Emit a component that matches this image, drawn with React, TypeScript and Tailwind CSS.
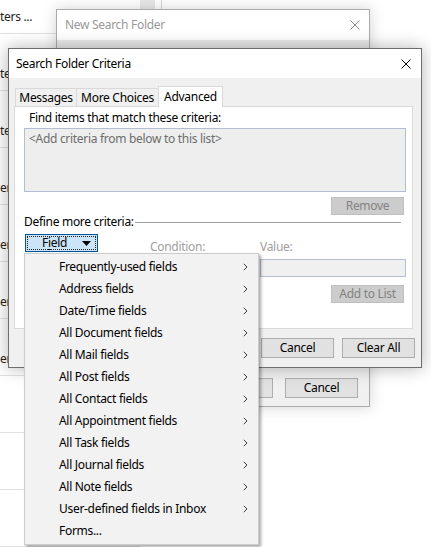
import React from 'react';

const menuItems: { label: string; sub: boolean }[] = [
  { label: 'Frequently-used fields', sub: true },
  { label: 'Address fields', sub: true },
  { label: 'Date/Time fields', sub: true },
  { label: 'All Document fields', sub: true },
  { label: 'All Mail fields', sub: true },
  { label: 'All Post fields', sub: true },
  { label: 'All Contact fields', sub: true },
  { label: 'All Appointment fields', sub: true },
  { label: 'All Task fields', sub: true },
  { label: 'All Journal fields', sub: true },
  { label: 'All Note fields', sub: true },
  { label: 'User-defined fields in Inbox', sub: true },
  { label: 'Forms...', sub: false },
];

// bits of the folder list entries peeking out from behind the dialog
const listTails = ['te', 'te', 'er', 'er', 'er', 'er', '', '', ''];

function CloseX({ color }: { color: string }) {
  return (
    <svg width="10" height="10" viewBox="0 0 10 10" className="shrink-0">
      <path d="M0.5 0.5 L9.5 9.5 M9.5 0.5 L0.5 9.5" stroke={color} strokeWidth="1" fill="none" />
    </svg>
  );
}

function Chevron() {
  return (
    <svg width="5" height="8" viewBox="0 0 5 8" className="shrink-0">
      <path d="M0.8 0.8 L4 4 L0.8 7.2" stroke="#3c3c3c" strokeWidth="1" fill="none" />
    </svg>
  );
}

function WinButton({ children, disabled, className = '' }: { children: React.ReactNode; disabled?: boolean; className?: string }) {
  return (
    <div
      className={`w-[73px] h-[20px] flex items-center justify-center border ${
        disabled ? 'bg-[#cccccc] border-[#bfbfbf] text-[#838383]' : 'bg-[#e1e1e1] border-[#adadad] text-black'
      } ${className}`}
    >
      {children}
    </div>
  );
}

function FolderList() {
  return (
    <div className="absolute left-0 top-0 h-[547px] flex">
      <div className="w-[140px] flex flex-col">
        <div className="h-[35px] border-b border-[#e1e1e1] flex items-center">
          <span className="text-[#222]">ters ...</span>
        </div>
        {listTails.map((t, i) => (
          <div key={i} className="h-[57px] shrink-0 border-b border-[#e1e1e1] pt-[32px]">
            <div className="h-[16px] leading-[16px] whitespace-nowrap text-[#222]">{t}</div>
          </div>
        ))}
      </div>
      <div className="w-[15px] h-[40px] bg-[#e8e8e8]" />
      <div className="w-[6px]" />
      <div className="w-px h-[40px] bg-[#d6d6d6]" />
    </div>
  );
}

function NewSearchFolderWindow() {
  return (
    <div className="absolute left-[56px] top-[9px] w-[314px] h-[398px] border border-[#aaaaaa] bg-[#f0f0f0] flex flex-col shadow-[0_0_14px_rgba(0,0,0,0.18)]">
      <div className="h-[30px] bg-white flex items-center justify-between pl-[8px] pr-[9px]">
        <span className="text-[#999999]">New Search Folder</span>
        <CloseX color="#8a8a8a" />
      </div>
      <div className="h-[8px] bg-[#e9e9e9]" />
      <div className="flex-1" />
      <div className="flex justify-end gap-[12px] pr-[11px] pb-[8px]">
        <WinButton>OK</WinButton>
        <WinButton>Cancel</WinButton>
      </div>
    </div>
  );
}

function CriteriaDialog() {
  return (
    <div className="absolute left-[8px] top-[48px] w-[414px] h-[320px] border border-[#6e6e6e] bg-[#f0f0f0] flex flex-col shadow-[0_0_16px_rgba(0,0,0,0.3)]">
      {/* title bar */}
      <div className="h-[29px] bg-white flex items-center justify-between pl-[7px] pr-[10px]">
        <span>Search Folder Criteria</span>
        <CloseX color="#000000" />
      </div>

      {/* tabs */}
      <div className="flex items-end h-[20px] mt-[8px] ml-[6px]">
        <div className="w-[62px] h-[18px] border border-b-0 border-[#d9d9d9] flex items-center justify-center pt-px">Messages</div>
        <div className="w-[82px] h-[18px] border border-l-0 border-b-0 border-[#d9d9d9] flex items-center justify-center pt-px">More Choices</div>
        <div className="relative z-10 w-[65px] h-[21px] -mb-px -ml-px border border-b-0 border-[#d9d9d9] bg-white flex items-start justify-center pt-[1px]">
          Advanced
        </div>
      </div>

      {/* tab page */}
      <div className="ml-[5px] w-[399px] h-[223px] border border-[#d9d9d9] bg-white flex flex-col pl-[9px] pr-[6px]">
        <div className="mt-[3px] ml-[5px] h-[16px] leading-[16px]">Find items that match these criteria:</div>
        <div className="mt-[2px] h-[64px] border border-[#b3bfd1] bg-[#eeeeee] pl-[4px] pt-[2px] leading-[16px] text-[#6d6d6d]">
          &lt;Add criteria from below to this list&gt;
        </div>
        <WinButton disabled className="self-end mt-[5px] mr-[2px] !h-[18px]">Remove</WinButton>

        <div className="h-[14px] flex items-center">
          <span className="leading-[14px]">Define more criteria:</span>
          <div className="flex-1 h-px bg-[#a0a0a0] ml-px mr-[5px]" />
        </div>

        <div className="mt-[5px] grid grid-cols-[126px_110px_1fr]">
          <div className="h-[20px]">
            <div className="ml-px w-[73px] h-[18px] border border-[#005499] bg-[#cce4f7] p-px">
              <div className="h-full border border-dotted border-[#222] flex items-center pl-[14px] pr-[4px]">
                <span className="flex-1 leading-[14px]">
                  F<span className="underline underline-offset-2">i</span>eld
                </span>
                <svg width="9" height="5" viewBox="0 0 9 5">
                  <path d="M0 0 L9 0 L4.5 5 Z" fill="#000" />
                </svg>
              </div>
            </div>
          </div>
          <div className="pt-[6px] leading-[14px] text-[#a0a0a0]">Condition:</div>
          <div className="pt-[6px] leading-[14px] text-[#a0a0a0]">Value:</div>

          <div className="mt-[5px]" />
          <div className="mt-[5px] mr-[10px] h-[18px] border border-[#b3bfd1] bg-[#f0f0f0]" />
          <div className="mt-[5px] h-[18px] border border-[#b3bfd1] bg-[#f0f0f0]" />
        </div>

        <WinButton disabled className="self-end mt-[8px] mr-[2px] !h-[18px]">Add to List</WinButton>
      </div>

      {/* dialog buttons */}
      <div className="mt-[9px] flex justify-end gap-[8px] pr-[6px]">
        <WinButton>OK</WinButton>
        <WinButton>Cancel</WinButton>
        <WinButton>Clear All</WinButton>
      </div>
    </div>
  );
}

function FieldMenu() {
  return (
    <div className="absolute left-[24px] top-[253px] w-[235px] border border-[#cccccc] bg-[#f2f2f2] py-[2px] shadow-[2px_2px_3px_rgba(0,0,0,0.35)]">
      {menuItems.map((item) => (
        <div key={item.label} className="h-[22px] flex items-center pl-[34px] pr-[10px]">
          <span className="flex-1 whitespace-nowrap">{item.label}</span>
          {item.sub && <Chevron />}
        </div>
      ))}
    </div>
  );
}

export default function App() {
  return (
    <div className="relative w-[431px] h-[547px] overflow-hidden bg-white text-[12px] tracking-[-0.3px] text-black font-['Noto_Sans','Segoe_UI',sans-serif]">
      <FolderList />
      <NewSearchFolderWindow />
      <CriteriaDialog />
      <FieldMenu />
    </div>
  );
}
